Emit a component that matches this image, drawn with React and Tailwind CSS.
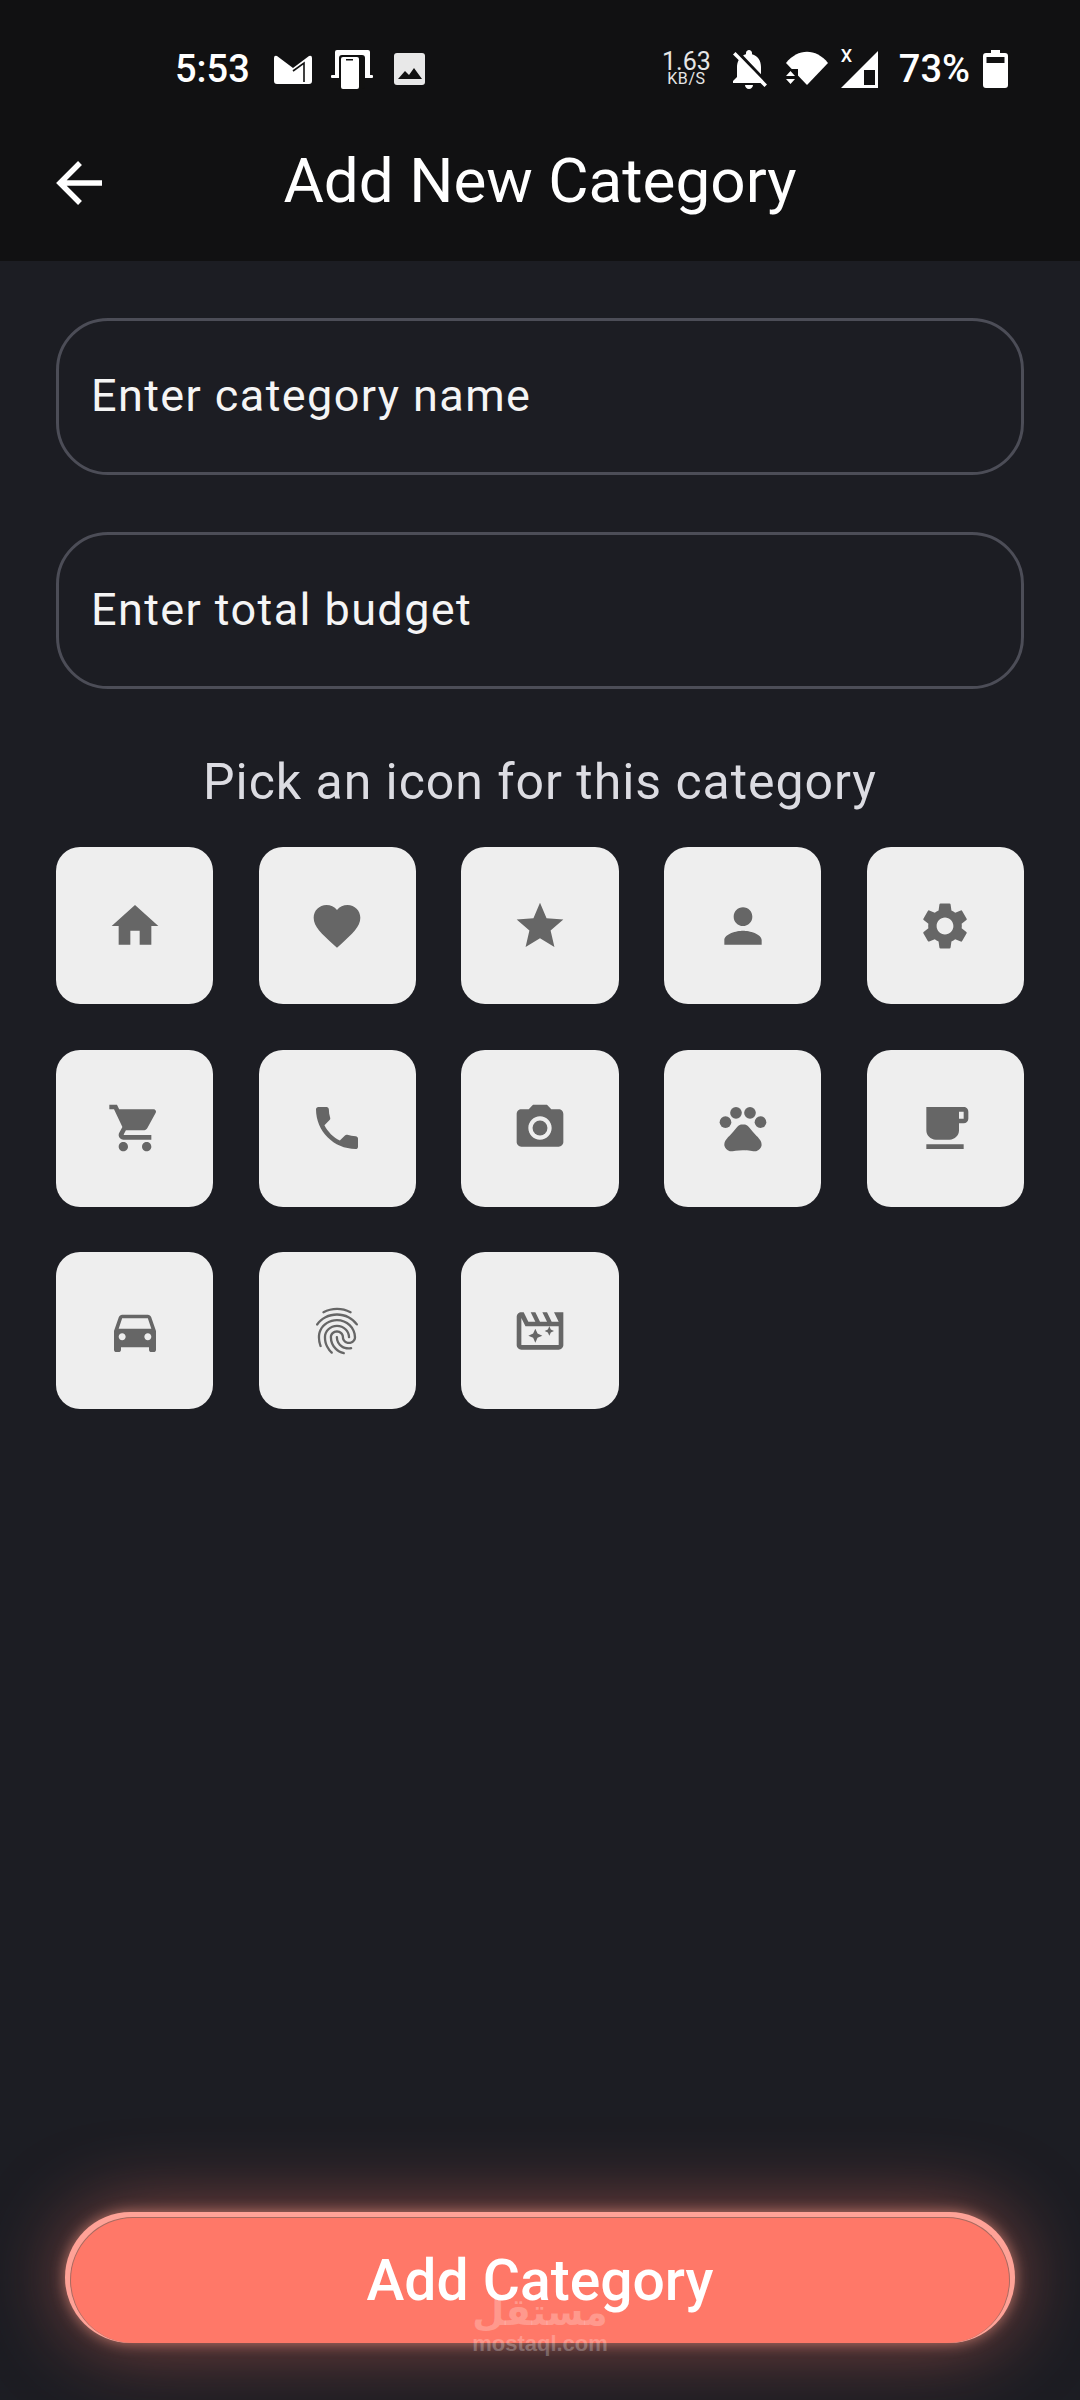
import {
  MdHome, MdFavorite, MdStar, MdPerson, MdSettings, MdShoppingCart, MdPhone, MdCameraAlt,
  MdPets, MdLocalCafe, MdDirectionsCar, MdFingerprint, MdOutlineMovieFilter, MdNotificationsOff,
} from 'react-icons/md';

const icons = [
  MdHome, MdFavorite, MdStar, MdPerson, MdSettings,
  MdShoppingCart, MdPhone, MdCameraAlt, MdPets, MdLocalCafe,
  MdDirectionsCar, MdFingerprint, MdOutlineMovieFilter,
];

function StatusBar() {
  return (
    <div className="h-[136px] pt-[49px] pl-[175px] pr-[72px] flex items-start justify-between text-white">
      <div className="flex items-center h-[40px]">
        <span className="text-[38px] leading-none font-medium">5:53</span>
        <svg width="38" height="29" viewBox="0 0 38 29" className="ml-[24px]">
          <path d="M0 3Q0 0 3 1L19 13L35 1Q38 0 38 3V26Q38 29 35 29H3Q0 29 0 26Z" fill="#fff" />
          <path d="M19 16L30 8V27" fill="none" stroke="#111" strokeWidth="1.6" />
        </svg>
        <svg width="42" height="39" viewBox="0 0 42 39" className="ml-[19px]">
          <rect x="4" width="35" height="27" rx="2" fill="#fff" />
          <rect y="25" width="42" height="3" rx="1" fill="#fff" />
          <rect x="8" y="5" width="26" height="34" rx="3" fill="#111" />
          <rect x="10" y="7" width="18" height="32" rx="2" fill="#fff" />
          <rect x="15" y="9" width="7" height="1.5" fill="#111" />
        </svg>
        <svg width="31" height="32" viewBox="0 0 31 32" className="ml-[21px]">
          <rect width="31" height="32" rx="3" fill="#e8e8e8" />
          <path d="M4 26L11 18L15 22L20 15L28 26Z" fill="#111" />
        </svg>
      </div>
      <div className="flex items-center h-[40px]">
        <div className="flex flex-col items-center text-[#e6e6e6]">
          <span className="text-[25px] leading-[20px]">1.63</span>
          <span className="text-[16px] leading-[14px] tracking-[0.6px]">KB/S</span>
        </div>
        <MdNotificationsOff size={48} className="ml-[14px]" />
        <svg width="42" height="36" viewBox="0 0 42 36" className="ml-[13px]">
          <path d="M21 34L0 12C12-3 30-3 42 12Z" fill="#fff" />
          <path d="M0 18H12V34H0Z" fill="#111" />
          <path d="M4.500 20L9 25H0ZM4.500 33L0 28H9Z" fill="#fff" />
        </svg>
        <div className="relative ml-[13px] w-[37px] h-[37px]">
          <svg width="37" height="37" viewBox="0 0 37 37">
            <path fillRule="evenodd" d="M37 0V37H0ZM23 19V34H34V19Z" fill="#fff" />
          </svg>
          <span className="absolute left-0 -top-[4px] text-[18px] leading-[18px] font-medium">X</span>
        </div>
        <span className="ml-[21px] text-[38px] leading-none font-medium">73%</span>
        <svg width="25" height="38" viewBox="0 0 25 38" className="ml-[13px]">
          <path fillRule="evenodd" d="M8 0H17V3H22Q25 3 25 6V35Q25 38 22 38H3Q0 38 0 35V6Q0 3 3 3H8ZM3.500 7V13H21.500V7Z" fill="#fff" />
        </svg>
      </div>
    </div>
  );
}

function Field({ placeholder }) {
  return (
    <input
      placeholder={placeholder}
      className="w-full h-[157px] rounded-[52px] border-[3px] border-[#4c4d57] bg-transparent px-[32px] pb-[2px] text-[45px] tracking-[1.4px] text-white placeholder:text-[#f5f5f5] outline-none"
    />
  );
}

export default function App() {
  return (
    <div className="relative w-[1080px] h-[2400px] flex flex-col bg-[#1c1d23] font-['Roboto',sans-serif] overflow-hidden">
      <header className="h-[261px] bg-[#111112]">
        <StatusBar />
        <div className="relative flex justify-center">
          <svg width="48" height="44" viewBox="0 0 48 44" fill="none" stroke="#fff" strokeWidth="5.500" className="absolute left-[56px] top-[25px]">
            <path d="M46 22H4M24 2L4 22L24 42" />
          </svg>
          <h1 className="text-[62px] leading-[90px] text-white">Add New Category</h1>
        </div>
      </header>

      <main className="flex-1 flex flex-col px-[56px] pt-[57px]">
        <div className="flex flex-col gap-[57px]">
          <Field placeholder="Enter category name" />
          <Field placeholder="Enter total budget" />
        </div>
        <p className="mt-[65px] text-center text-[50px] leading-[56px] tracking-[0.96px] text-[#dcdce2]">
          Pick an icon for this category
        </p>
        <div className="mt-[37px] grid grid-cols-5 gap-x-[45.5px] gap-y-[45.5px]">
          {icons.map((Icon, i) => (
            <div key={i} className="h-[157px] rounded-[24px] bg-[#eeeeee] flex items-center justify-center text-[#666666]">
              <Icon size={56} />
            </div>
          ))}
        </div>

        <button className="mt-auto mb-[57px] mx-[9px] h-[131px] rounded-full bg-[#ffa297] px-[5px] pt-[5px] shadow-[0_0_14px_rgba(255,160,140,0.6),0_0_80px_rgba(255,122,105,0.5)]">
          <div className="h-full rounded-full border border-b-0 border-[#a86a60] bg-[#ff7868] flex items-center justify-center text-[57px] font-medium text-white">
            Add Category
          </div>
        </button>
      </main>

      {/* mostaql watermark */}
      <div className="absolute left-[475px] top-[2293px] w-[130px] flex flex-col items-center text-white/25 font-['DejaVu_Sans',sans-serif] font-bold">
        <span className="text-[37px] leading-[40px]">مستقل</span>
        <span className="text-[22px] leading-[22px] font-['Liberation_Sans',sans-serif]">mostaql.com</span>
      </div>
    </div>
  );
}
